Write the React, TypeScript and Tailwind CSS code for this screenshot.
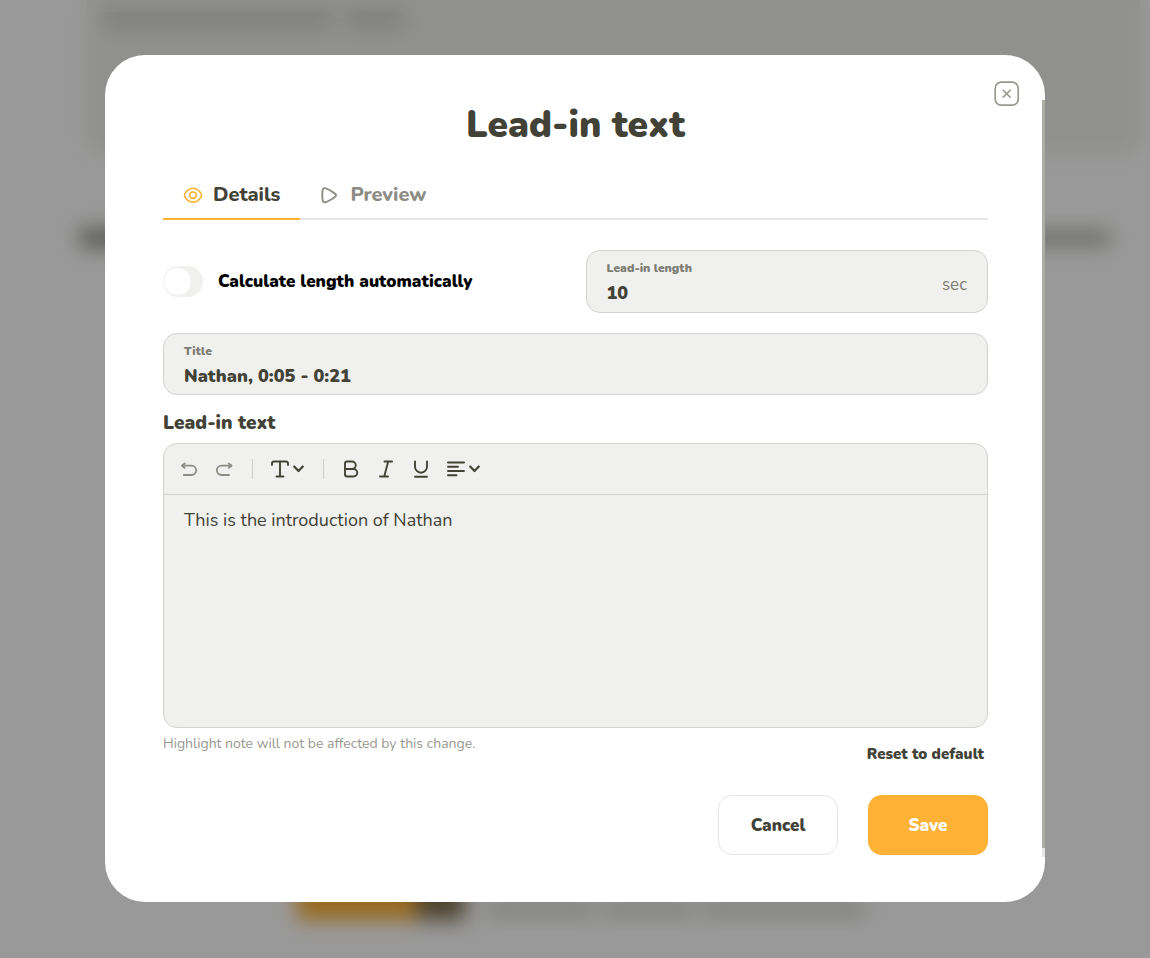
import { useState } from "react";

const iconProps = {
  fill: "none",
  stroke: "currentColor",
  strokeLinecap: "round",
  strokeLinejoin: "round",
} as const;

const EyeIcon = () => (
  <svg width="20" height="20" viewBox="0 0 20 20" strokeWidth="1.6" {...iconProps}>
    <path d="M1.5 10.2c0-1 .4-1.800 1.100-2.700C4.200 5.500 6.500 3.200 10 3.200s5.800 2.300 7.400 4.300c.7.9 1.100 1.700 1.100 2.700s-.4 1.800-1.100 2.700c-1.600 2-3.900 4.200-7.400 4.200s-5.800-2.200-7.400-4.200c-.7-.9-1.100-1.700-1.100-2.700Z" />
    <circle cx="10" cy="10.200" r="3.200" />
  </svg>
);

const PlayIcon = () => (
  <svg width="20" height="20" viewBox="0 0 20 20" strokeWidth="1.900" {...iconProps}>
    <path d="M2.300 10.200c0-3.400.1-5.300.7-6.200.6-.9 1.700-1.100 2.900-.6 1.400.5 3.700 1.700 5.600 2.900 2.900 1.800 4.600 2.700 4.600 3.900s-1.700 2.200-4.600 4c-1.900 1.200-4.200 2.400-5.600 2.900-1.200.4-2.300.2-2.900-.7-.6-.9-.7-2.800-.7-6.200Z" />
  </svg>
);

const CloseIcon = () => (
  <svg width="26" height="26" viewBox="0 0 26 26" {...iconProps}>
    <rect x="1.200" y="1.200" width="23" height="23" rx="6" strokeWidth="1.700" />
    <path d="m9.200 9.200 7 7m0-7-7 7" strokeWidth="1.600" />
  </svg>
);

const UndoIcon = () => (
  <svg width="20" height="20" viewBox="0 0 20 20" strokeWidth="1.800" {...iconProps}>
    <path d="M3.800 16H11.500a4.300 4.300 0 0 0 0-9.300H2.500" />
    <path d="M4.800 4.500C3.800 5.100 2.800 5.800 2 6.700c.8.900 1.800 1.600 2.800 2.200" />
  </svg>
);

const RedoIcon = () => (
  <svg width="20" height="20" viewBox="0 0 20 20" strokeWidth="1.800" {...iconProps}>
    <path d="M14 16H6.500a4.300 4.300 0 0 1 0-9.300h9.500" />
    <path d="M13.700 4.500c1 .6 2 1.300 2.800 2.200-.8.900-1.800 1.600-2.800 2.200" />
  </svg>
);

const TextIcon = () => (
  <svg width="20" height="20" viewBox="0 0 20 20" strokeWidth="1.900" {...iconProps}>
    <path d="M2 6V4.500C2 3 2.500 2.500 4 2.500h12c1.500 0 2 .5 2 2V6M10 2.500v15M6.500 17.500h7" />
  </svg>
);

const ChevronIcon = () => (
  <svg width="14" height="20" viewBox="0 0 14 20" strokeWidth="2.200" {...iconProps}>
    <path d="m2.200 7.500 4.300 4.500 4.300-4.500" />
  </svg>
);

const BoldIcon = () => (
  <svg width="20" height="20" viewBox="0 0 20 20" strokeWidth="1.900" {...iconProps}>
    <path d="M4 4.500C4 3 4.500 2.500 6 2.500h5a3.700 3.700 0 0 1 0 7.500H4V4.500ZM4 10h8.500a3.700 3.700 0 0 1 0 7.500H6.500C4.500 17.500 4 17 4 15.500V10Z" />
  </svg>
);

const ItalicIcon = () => (
  <svg width="20" height="20" viewBox="0 0 20 20" strokeWidth="1.900" {...iconProps}>
    <path d="M8.500 2.500h7.500M4 17.500h8M12.200 2.500l-4 15" />
  </svg>
);

const UnderlineIcon = () => (
  <svg width="20" height="20" viewBox="0 0 20 20" strokeWidth="1.900" {...iconProps}>
    <path d="M4 2.500v5.200a6 6 0 0 0 12 0V2.500M4 17.800h12" />
  </svg>
);

const AlignIcon = () => (
  <svg width="20" height="20" viewBox="0 0 20 20" strokeWidth="1.900" {...iconProps}>
    <path d="M2 3.500h16M2 7.700h10M2 12h16M2 16.300h8.500" />
  </svg>
);

const Divider = () => <span className="mx-0.5 h-5 w-px bg-[#cfcfcd]" />;

// blurred content behind the dialog
const Page = () => (
  <div className="flex min-h-screen flex-col bg-white">
    <div className="mr-2.5 ml-[87px] flex h-[154px] gap-4 rounded-b-2xl bg-[#f0f0ed] px-4 pt-3">
      <div className="h-[14px] w-[228px] bg-[#cbcbc6]" />
      <div className="h-[14px] w-[56px] bg-[#cbcbc6]" />
    </div>
    <div className="mt-[74px] mr-10 ml-20 flex items-center justify-between">
      <div className="h-5 w-60 bg-[#97978f]" />
      <div className="h-4 w-40 bg-[#b5b5ae]" />
    </div>
    <div className="mt-auto mb-[38px] ml-[297px] flex items-end">
      <div className="h-[60px] w-[120px] bg-[#fdb135]" />
      <div className="h-[60px] w-[48px] bg-[#80704f]" />
      <div className="mb-1 ml-5 flex gap-2">
        <div className="h-[14px] w-[110px] bg-[#d2d2cd]" />
        <div className="h-[14px] w-[90px] bg-[#d2d2cd]" />
        <div className="h-[14px] w-[164px] bg-[#d2d2cd]" />
      </div>
    </div>
  </div>
);

const fieldClass = "rounded-[14px] border border-[#d2d2d0] bg-[#f0f0ee]";
const fieldLabelClass = "text-xs leading-5 font-black text-[#7d7d74]";
const fieldInputClass = "h-7 w-full bg-transparent pt-0.5 text-lg font-black outline-none";
const tabClass = "flex items-center gap-2.5 border-b-2 px-5 pt-0.5 text-xl leading-6 font-extrabold";

const App = () => {
  const [tab, setTab] = useState("details");
  const [auto, setAuto] = useState(false);
  const [length, setLength] = useState("10");
  const [title, setTitle] = useState("Nathan, 0:05 - 0:21");
  const [text, setText] = useState("This is the introduction of Nathan");

  return (
    <div className="font-['Nunito','Lato',sans-serif] text-[#424237]">
      <Page />
      <div className="fixed inset-0 flex items-center justify-center bg-black/40 pb-0.5 backdrop-blur-[10px]">
        <div
          role="dialog"
          aria-labelledby="dialog-title"
          className="relative mx-4 w-full max-w-[940px] rounded-[40px] bg-white pt-[46px] pr-[57px] pb-[47px] pl-[58px]"
        >
          <button aria-label="Close" className="absolute top-[26px] right-[25px] text-[#989890]">
            <CloseIcon />
          </button>
          <div className="absolute top-[45px] right-0 bottom-[45px] w-[3px] bg-[#e6e6e4] pb-[9px]">
            <div className="h-full bg-[#adada5]" />
          </div>

          <h1 id="dialog-title" className="text-center text-[37px] leading-12 font-black">
            Lead-in text
          </h1>

          <div role="tablist" className="mt-[21px] flex h-[50px] shadow-[inset_0_-2px_0_#e6e6e6]">
            <button
              role="tab"
              aria-selected={tab === "details"}
              onClick={() => setTab("details")}
              className={`${tabClass} ${tab === "details" ? "border-[#fdb135]" : "border-transparent text-[#8c8c84]"}`}
            >
              <span className="text-[#fdb135]">
                <EyeIcon />
              </span>
              Details
            </button>
            <button
              role="tab"
              aria-selected={tab === "preview"}
              onClick={() => setTab("preview")}
              className={`${tabClass} ${tab === "preview" ? "border-[#fdb135]" : "border-transparent text-[#8c8c84]"}`}
            >
              <PlayIcon />
              Preview
            </button>
          </div>

          <div className="mt-[30px] grid grid-cols-2 gap-5">
            <label className="flex items-center gap-[15px] text-[17px] font-black text-black">
              <input
                type="checkbox"
                role="switch"
                checked={auto}
                onChange={(e) => setAuto(e.target.checked)}
                className="h-[31px] w-10 appearance-none rounded-full bg-[#f0f0ee] px-px py-0.5 before:block before:size-[27px] before:rounded-full before:bg-white checked:bg-[#fdb135] checked:before:ml-auto"
              />
              <span className="pt-0.5">Calculate length automatically</span>
            </label>
            <div className={`${fieldClass} flex h-[63px] items-center px-5`}>
              <div className="flex min-w-0 flex-1 flex-col pt-0.5">
                <label htmlFor="length" className={fieldLabelClass}>
                  Lead-in length
                </label>
                <input
                  id="length"
                  value={length}
                  onChange={(e) => setLength(e.target.value)}
                  className={fieldInputClass}
                />
              </div>
              <span className="mt-2 text-[17px] text-[#7d7d74]">sec</span>
            </div>
          </div>

          <div className={`${fieldClass} mt-5 flex h-[62px] flex-col justify-center px-5 pt-0.5`}>
            <label htmlFor="title" className={fieldLabelClass}>
              Title
            </label>
            <input
              id="title"
              value={title}
              onChange={(e) => setTitle(e.target.value)}
              className={fieldInputClass}
            />
          </div>

          <label htmlFor="lead-in" className="mt-3.5 block text-[19px] leading-7 font-black">
            Lead-in text
          </label>
          <div className={`${fieldClass} mt-1.5 overflow-hidden`}>
            <div className="flex h-[51px] items-center gap-[15px] border-b border-[#d2d2d0] pl-4">
              <button aria-label="Undo" className="text-[#8c8c84]"><UndoIcon /></button>
              <button aria-label="Redo" className="text-[#8c8c84]"><RedoIcon /></button>
              <Divider />
              <button aria-label="Text style" className="flex gap-0.5"><TextIcon /><ChevronIcon /></button>
              <Divider />
              <button aria-label="Bold"><BoldIcon /></button>
              <button aria-label="Italic"><ItalicIcon /></button>
              <button aria-label="Underline"><UnderlineIcon /></button>
              <button aria-label="Align" className="flex gap-0.5"><AlignIcon /><ChevronIcon /></button>
            </div>
            <textarea
              id="lead-in"
              value={text}
              onChange={(e) => setText(e.target.value)}
              className="block h-[232px] w-full resize-none bg-transparent px-5 py-[11px] text-lg leading-7 outline-none"
            />
          </div>

          <div className="flex justify-between pr-1">
            <p className="mt-1.5 text-sm leading-5 text-[#989890]">
              Highlight note will not be affected by this change.
            </p>
            <button className="mt-3.5 text-[15px] leading-6 font-black">Reset to default</button>
          </div>

          <div className="mt-[29px] flex justify-end gap-[30px]">
            <button className="h-[60px] w-[120px] rounded-[14px] border border-[#e6e6e4] pt-0.5 text-[17px] font-black">
              Cancel
            </button>
            <button className="h-[60px] w-[120px] rounded-[14px] bg-[#fdb135] pt-0.5 text-[17px] font-black text-white">
              Save
            </button>
          </div>
        </div>
      </div>
    </div>
  );
};

export default App;
